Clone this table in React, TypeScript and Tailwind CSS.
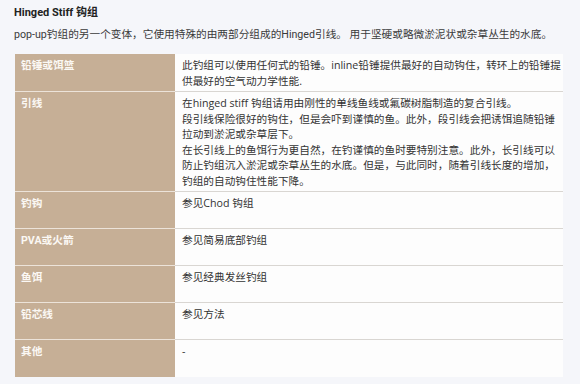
const rows: { label: string; lines: string[] }[] = [
  {
    label: '铅锤或饵篮',
    lines: ['此钓组可以使用任何式的铅锤。inline铅锤提供最好的自动钩住，转环上的铅锤提供最好的空气动力学性能.'],
  },
  {
    label: '引线',
    lines: [
      '在hinged stiff 钩组请用由刚性的单线鱼线或氟碳树脂制造的复合引线。',
      '段引线保险很好的钩住，但是会吓到谨慎的鱼。此外，段引线会把诱饵追随铅锤拉动到淤泥或杂草层下。',
      '在长引线上的鱼饵行为更自然，在钓谨慎的鱼时要特别注意。此外，长引线可以防止钓组沉入淤泥或杂草丛生的水底。但是，与此同时，随着引线长度的增加，钓组的自动钩住性能下降。',
    ],
  },
  { label: '钓钩', lines: ['参见Chod 钩组'] },
  { label: 'PVA或火箭', lines: ['参见简易底部钓组'] },
  { label: '鱼饵', lines: ['参见经典发丝钓组'] },
  { label: '铅芯线', lines: ['参见方法'] },
  { label: '其他', lines: ['-'] },
]

export default function App() {
  return (
    <div className="min-h-[384px] w-[580px] bg-[#f5f6fa] pl-[14px] pr-[17px] pt-[5px] font-['Roboto','Noto_Sans_CJK_SC',sans-serif]">
      <h3 className="text-[11px] font-bold leading-[16px] text-[#222]">Hinged Stiff 钩组</h3>
      <p className="mt-[6px] text-[10.67px] leading-[16px] text-[#3a3a3a]">
        pop-up钓组的另一个变体，它使用特殊的由两部分组成的Hinged引线。 用于坚硬或略微淤泥状或杂草丛生的水底。
      </p>
      <table className="mt-[11px] ml-px w-[548px] border-collapse text-[10.67px] leading-[15.5px]">
        <tbody>
          {rows.map((r, i) => (
            <tr key={r.label}>
              <td
                className={`h-[37px] w-[160px] bg-[#c6af96] pl-[6px] pr-[6px] pt-[4px] pb-[2px] align-top font-bold text-[#fbf8f4] ${
                  i > 0 ? 'border-t border-[#ece3d9]' : ''
                }`}
              >
                {r.label}
              </td>
              <td
                className={`bg-[#fdfdfd] pl-[7px] pr-[1px] pt-[4px] pb-[2px] align-top font-['Open_Sans','Noto_Sans_CJK_SC',sans-serif] text-[#333] ${
                  i > 0 ? 'border-t border-[#d9d6d2]' : ''
                }`}
              >
                {r.lines.map((l) => (
                  <div key={l}>{l}</div>
                ))}
              </td>
            </tr>
          ))}
        </tbody>
      </table>
    </div>
  )
}
